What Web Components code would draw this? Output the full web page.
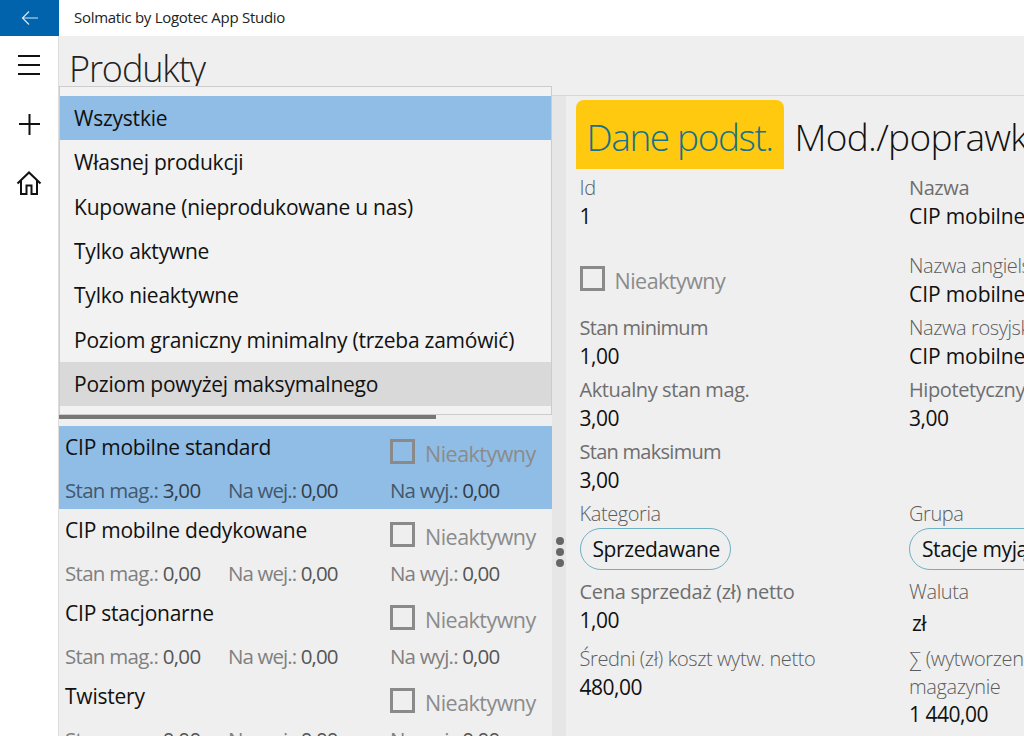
<!DOCTYPE html>
<html lang="pl"><head><meta charset="utf-8"><title>Produkty</title>
<style>
html,body{margin:0;height:736px;overflow:hidden;background:#fff;font-family:"Open Sans","Noto Sans",sans-serif;color:#111}
</style></head><body>
<app-shell></app-shell>
<script>
const def=(n,html,init)=>customElements.define(n,class extends HTMLElement{constructor(){super();this.attachShadow({mode:'open'}).innerHTML=html;}connectedCallback(){init&&init.call(this,this.shadowRoot)}});
const attr=(el,a,d='')=>el.getAttribute(a)??d;

def('title-bar',`<style>
:host{display:flex;height:36px;background:#fff;align-items:center}
.back{width:59px;height:36px;background:#0063ab;display:flex;align-items:center;justify-content:center}
span{margin-left:15px;font-size:15px;letter-spacing:-.28px;color:#222;position:relative;top:-1px}
</style><div class="back"><svg width="18" height="16" viewBox="0 0 18 16" fill="none" stroke="#d5e6f4" stroke-width="1.2"><path d="M1.5 8H17M8 1.5 1.5 8 8 14.5"/></svg></div><span><slot></slot></span>`);

def('nav-rail',`<style>
:host{display:flex;flex-direction:column;width:59px;flex:none;background:#fff;align-items:center;box-sizing:border-box;border-right:1px solid #ddd}
svg{display:block}
.m{margin-top:18px}.p{margin-top:36px}.h{margin-top:34px}
</style>
<svg class="m" width="24" height="22" viewBox="0 0 24 22" stroke="#111" stroke-width="2"><path d="M1 2h22M1 11h22M1 20h22"/></svg>
<svg class="p" width="24" height="24" viewBox="0 0 24 24" stroke="#111" stroke-width="2"><path d="M2 12h21M12.5 2v21"/></svg>
<svg class="h" width="26" height="26" viewBox="0 0 26 26" fill="none" stroke="#111" stroke-width="2"><path d="M1.500 13.500 13 2.500 24.500 13.500M5 10.500V24H10.500V15.500H15.500V24H21V10.500"/></svg>`);

def('flyout-menu',`<style>
:host{position:absolute;left:0;top:0;width:493px;height:329px;box-sizing:border-box;background:#f2f2f2;border:1px solid #ccc;padding-top:9px;display:block;z-index:2}
.bar{position:absolute;left:-1px;top:328px;width:377px;height:4px;background:#777}
</style><slot></slot><div class="bar"></div>`);

def('menu-item',`<style>
:host{display:flex;align-items:center;height:44.3px;padding-left:14px;font-size:21px;letter-spacing:-.23px;color:#111;position:relative}
:host([sel]){background:#8fbde6}
:host([hov]){background:#d9d9d9}
</style><slot></slot>`);

def('check-box',`<style>
:host{display:flex;align-items:center;font-size:21.500px;letter-spacing:-.52px;color:#8b8b8b}
i{width:25px;height:25px;border:3px solid #8a8a8a;box-sizing:border-box;margin-right:10px;flex:none;position:relative;top:-2px}
</style><i></i><span>Nieaktywny</span>`);

def('product-row',`<style>
:host{display:block;height:83px;padding:0 0 0 6px;box-sizing:border-box;position:relative}
:host([sel]){background:#8fbde6;--c:#44586d;--v:#333c46}
.top{display:grid;grid-template-columns:325px 1fr;height:49px;align-items:center}
.n{font-size:21px;letter-spacing:-.23px;color:#111;position:relative;top:-4px;white-space:nowrap}
check-box{position:relative;top:3px}
.s{display:grid;grid-template-columns:163px 162px 1fr;font-size:20.500px;letter-spacing:-.82px;line-height:31px;color:var(--c,#808080);white-space:nowrap}
.s1{letter-spacing:-.7px}.s2{letter-spacing:-.9px}
b{font-weight:400;color:var(--v,#555)}
</style><div class="top"><div class="n"><slot></slot></div><check-box></check-box></div>
<div class="s"><div class="s1">Stan mag.: <b class="a"></b></div><div class="s2">Na wej.: <b>0,00</b></div><div>Na wyj.: <b>0,00</b></div></div>`,
function(r){r.querySelector('.a').textContent=attr(this,'stan','0,00')});

def('list-pane',`<style>
:host{display:block;position:relative;width:493px;flex:none;height:100%;overflow:hidden}
.list{padding-top:340px;height:100%;box-sizing:border-box;overflow:hidden}
</style><slot name="fly"></slot><div class="list"><slot></slot></div>`);

def('tab-strip',`<style>
:host{display:flex;height:69px;margin-left:10px;white-space:nowrap;font-size:37px;font-weight:300;letter-spacing:-1.4px;color:#111;margin-top:4px;align-items:stretch}
.on{background:#ffc90f;border-radius:8px 8px 0 0;padding:4px 0 0 10.500px;color:#15728a;display:flex;align-items:center;width:208px;flex:none;box-sizing:border-box}
.off{padding:4px 0 0 10.500px;display:flex;align-items:center;flex:none;letter-spacing:-.7px}
</style><div class="on">Dane podst.</div><div class="off">Mod./poprawki</div>`);

def('data-field',`<style>
:host{display:block;white-space:nowrap}
.l{font-size:20px;line-height:28px;letter-spacing:-.4px;color:#6e6e6e}
:host([light]) .l{font-weight:300;color:#5c5c5c}
:host([tight]) .l{letter-spacing:-.72px}
:host([wide]) .l{letter-spacing:-.3px}
.v{font-size:21px;line-height:28px;letter-spacing:-.5px;color:#111}
:host([name]) .v{letter-spacing:-.1px}
:host([sum]) .v{line-height:27px}
</style><div class="l"><slot name="label"></slot></div><div class="v"><slot></slot></div>`);

def('pill-value',`<style>
:host{display:inline-flex;align-items:center;height:42px;box-sizing:border-box;border:1.500px solid #6eb1c4;border-radius:21px;padding:0 10px 0 12px;font-size:21px;letter-spacing:-.4px;color:#111;white-space:nowrap}
</style><slot></slot>`);

def('detail-pane',`<style>
:host{display:block;flex:1;min-width:0;position:relative;overflow:hidden;border-top:1px solid #d8d8d8;margin-top:9px;height:calc(100% - 9px);box-sizing:border-box}
.cols{display:grid;grid-template-columns:329.500px 300px;padding-left:13.500px;margin-top:5px}
.c{display:flex;flex-direction:column;min-width:0;align-items:flex-start}
</style><tab-strip></tab-strip><div class="cols"><div class="c"><slot name="a"></slot></div><div class="c"><slot name="b"></slot></div></div>`);

def('app-shell',`<style>
:host{display:flex;flex-direction:column;width:1024px;height:736px;overflow:hidden}
.body{display:flex;height:700px}
.main{flex:1;background:#efefef;display:flex;flex-direction:column;min-width:0}
h1{margin:0;height:50px;box-sizing:border-box;padding:8px 0 0 10px;font-size:36px;line-height:50px;font-weight:300;letter-spacing:-1.1px;color:#222;white-space:nowrap;overflow:hidden;flex:none}
.split{display:flex;flex:1;min-height:0}
.sash{width:14px;flex:none;background:#e6e6e6;margin-top:9px;border-top:1px solid #d8d8d8;display:flex;flex-direction:column;align-items:center;gap:3px;padding-top:441px;box-sizing:border-box}
.sash i{width:8px;height:8px;border-radius:50%;background:#666;margin-left:1px;flex:none}
.m1{margin-top:32px}.m2{margin-top:16px}.m3{margin-top:6px}.m4{margin-top:8px}.m5{margin-top:11px}.m6{margin-top:22px}
.cb{height:36px}
.zl{display:block;position:relative;top:3px;left:3px}
</style>
<title-bar>Solmatic by Logotec App Studio</title-bar>
<div class="body"><nav-rail></nav-rail><div class="main"><h1>Produkty</h1>
<div class="split">
<list-pane>
<flyout-menu slot="fly">
<menu-item sel>Wszystkie</menu-item><menu-item>Własnej produkcji</menu-item><menu-item>Kupowane (nieprodukowane u nas)</menu-item><menu-item>Tylko aktywne</menu-item><menu-item>Tylko nieaktywne</menu-item><menu-item>Poziom graniczny minimalny (trzeba zamówić)</menu-item><menu-item hov>Poziom powyżej maksymalnego</menu-item>
</flyout-menu>
<product-row sel stan="3,00">CIP mobilne standard</product-row>
<product-row>CIP mobilne dedykowane</product-row>
<product-row>CIP stacjonarne</product-row>
<product-row>Twistery</product-row>
</list-pane>
<div class="sash"><i></i><i></i><i></i></div>
<detail-pane>
<data-field slot="a" light><span slot="label">Id</span>1</data-field>
<check-box slot="a" class="m1 cb"></check-box>
<data-field slot="a" class="m2" tight><span slot="label">Stan minimum</span>1,00</data-field>
<data-field slot="a" class="m3"><span slot="label">Aktualny stan mag.</span>3,00</data-field>
<data-field slot="a" class="m3" tight><span slot="label">Stan maksimum</span>3,00</data-field>
<data-field slot="a" class="m3" light><span slot="label">Kategoria</span></data-field>
<pill-value slot="a">Sprzedawane</pill-value>
<data-field slot="a" class="m4" wide><span slot="label">Cena sprzedaż (zł) netto</span>1,00</data-field>
<data-field slot="a" class="m5" light><span slot="label">Średni (zł) koszt wytw. netto</span>480,00</data-field>

<data-field slot="b" name><span slot="label">Nazwa</span>CIP mobilne standard</data-field>
<data-field slot="b" class="m6" light name><span slot="label">Nazwa angielska</span>CIP mobilne standard</data-field>
<data-field slot="b" class="m3" light name><span slot="label">Nazwa rosyjska</span>CIP mobilne standard</data-field>
<data-field slot="b" class="m3"><span slot="label">Hipotetyczny stan</span>3,00</data-field>
<data-field slot="b" style="margin-top:68px" light><span slot="label">Grupa</span></data-field>
<pill-value slot="b">Stacje myjące</pill-value>
<data-field slot="b" class="m4" light><span slot="label">Waluta</span><span class="zl">zł</span></data-field>
<data-field slot="b" class="m5" light sum><span slot="label">∑ (wytworzenia) na<br>magazynie</span>1 440,00</data-field>
</detail-pane>
</div></div></div>`);
</script></body></html>
